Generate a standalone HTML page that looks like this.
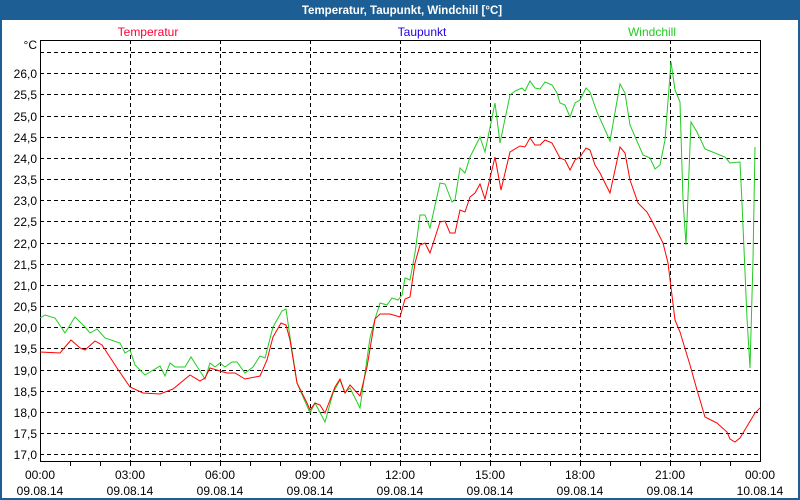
<!DOCTYPE html>
<html><head><meta charset="utf-8"><style>
html,body{margin:0;padding:0;width:800px;height:500px;overflow:hidden;background:#fff}
svg{display:block}
text{font-family:"Liberation Sans",sans-serif;font-size:12px}
</style></head><body>
<svg width="800" height="500" xmlns="http://www.w3.org/2000/svg">
<rect x="0" y="0" width="800" height="500" fill="#1d5e94"/>
<rect x="2" y="20" width="796" height="478" fill="#fff"/>
<text x="402" y="14" fill="#fff" font-weight="bold" text-anchor="middle" style="font-size:11.5px">Temperatur, Taupunkt, Windchill [°C]</text>
<text x="148" y="36" fill="#ff0033" text-anchor="middle">Temperatur</text>
<text x="422" y="36" fill="#2200dd" text-anchor="middle">Taupunkt</text>
<text x="652" y="36" fill="#22cc22" text-anchor="middle">Windchill</text>
<g stroke="#000" stroke-width="1" stroke-dasharray="4,3" fill="none">
<path d="M40 52.5H760M40 73.5H760M40 94.5H760M40 116.5H760M40 137.5H760M40 158.5H760M40 179.5H760M40 200.5H760M40 221.5H760M40 243.5H760M40 264.5H760M40 285.5H760M40 306.5H760M40 327.5H760M40 348.5H760M40 370.5H760M40 391.5H760M40 412.5H760M40 433.5H760M40 454.5H760"/>
<path d="M130.5 40V461M220.5 40V461M310.5 40V461M400.5 40V461M490.5 40V461M580.5 40V461M670.5 40V461"/>
</g>
<rect x="40.5" y="40.5" width="720" height="421" fill="none" stroke="#000"/>
<path stroke="#000" d="M70.5 461v5M100.5 461v5M130.5 461v5M160.5 461v5M190.5 461v5M220.5 461v5M250.5 461v5M280.5 461v5M310.5 461v5M340.5 461v5M370.5 461v5M400.5 461v5M430.5 461v5M460.5 461v5M490.5 461v5M520.5 461v5M550.5 461v5M580.5 461v5M610.5 461v5M640.5 461v5M670.5 461v5M700.5 461v5M730.5 461v5"/>
<g fill="#000" text-anchor="end">
<text x="37" y="49">°C</text>
<text x="37" y="78">26,0</text><text x="37" y="99">25,5</text><text x="37" y="121">25,0</text><text x="37" y="142">24,5</text><text x="37" y="163">24,0</text><text x="37" y="184">23,5</text><text x="37" y="205">23,0</text><text x="37" y="226">22,5</text><text x="37" y="248">22,0</text><text x="37" y="269">21,5</text><text x="37" y="290">21,0</text><text x="37" y="311">20,5</text><text x="37" y="332">20,0</text><text x="37" y="353">19,5</text><text x="37" y="375">19,0</text><text x="37" y="396">18,5</text><text x="37" y="417">18,0</text><text x="37" y="438">17,5</text><text x="37" y="459">17,0</text>
</g>
<g fill="#000" text-anchor="middle">
<text x="40" y="479">00:00</text><text x="40" y="495">09.08.14</text>
<text x="130" y="479">03:00</text><text x="130" y="495">09.08.14</text>
<text x="220" y="479">06:00</text><text x="220" y="495">09.08.14</text>
<text x="310" y="479">09:00</text><text x="310" y="495">09.08.14</text>
<text x="400" y="479">12:00</text><text x="400" y="495">09.08.14</text>
<text x="490" y="479">15:00</text><text x="490" y="495">09.08.14</text>
<text x="580" y="479">18:00</text><text x="580" y="495">09.08.14</text>
<text x="670" y="479">21:00</text><text x="670" y="495">09.08.14</text>
<text x="760" y="479">00:00</text><text x="760" y="495">10.08.14</text>
</g>
<polyline fill="none" stroke="#22cc22" stroke-width="1" points="40,318 45,315 55,318 65,333 75,317 85,327 90,333 97,329 105,338 120,343 125,353 130,350 135,365 145,375 160,366 165,376 170,363 175,367 185,367 191,357 205,379 210,363 215,367 220,363 225,367 232,362 237,362 245,373 253,367 260,356 265,358 273,327 282,311 286,309 290,337 297,383 310,413 315,403 325,422 333,393 340,380 345,393 350,388 360,408 370,338 375,319 380,303 387,305 392,298 398,300 402,295 405,278 410,280 415,253 420,215 425,215 430,228 440,183 445,184 452,202 455,200 460,168 465,173 470,157 480,137 485,152 495,103 500,143 510,95 515,91 522,88 525,91 530,81 535,88 540,89 545,82 552,85 557,93 560,103 565,105 570,117 575,103 580,100 586,88 590,92 597,112 610,141 620,84 625,93 630,125 643,155 650,158 655,169 660,165 665,140 671,62 675,90 680,102 683,200 686,245 691,122 697,132 705,149 725,157 730,163 740,162 742,203 747,318 750,368 753,260 755,147"/>
<polyline fill="none" stroke="#ff0000" stroke-width="1" points="40,352 60,353 71,340 80,348 85,350 95,341 102,345 117,368 130,387 143,393 160,394 173,389 190,375 200,381 205,378 210,368 220,371 227,373 235,373 245,379 260,376 267,360 273,337 281,323 286,325 290,340 297,383 307,403 310,410 315,403 320,405 325,413 335,387 340,379 345,393 350,385 360,396 367,367 375,319 380,314 390,314 400,317 405,299 410,297 415,263 420,245 425,243 430,253 440,222 445,221 450,233 455,233 460,210 465,212 470,197 475,193 480,184 485,199 495,157 501,190 510,152 520,146 525,147 530,138 535,145 540,145 545,140 552,143 560,158 565,160 570,170 575,160 580,157 586,148 590,150 595,165 600,173 610,193 620,147 625,153 630,180 638,203 647,212 653,223 663,243 668,263 675,320 680,332 690,365 697,390 700,400 705,417 717,423 727,432 730,439 735,442 740,438 755,413 760,408"/>
</svg>
</body></html>
